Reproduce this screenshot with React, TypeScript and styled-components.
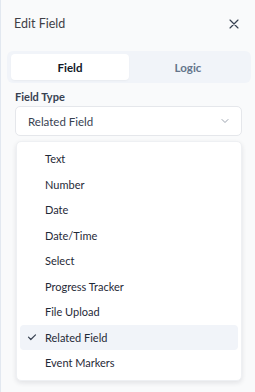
import React from 'react';
import styled, { createGlobalStyle } from 'styled-components';

const GlobalStyle = createGlobalStyle`
  html, body { margin: 0; padding: 0; }
  body {
    background: #f9fafb;
    font-family: Lato, "Noto Sans", sans-serif;
    -webkit-font-smoothing: antialiased;
  }
`;

const Panel = styled.div`
  width: 255px;
  height: 392px;
  box-sizing: border-box;
  border-left: 1px solid #e2e8f0;
  background: #f9fafb;
  display: flex;
  flex-direction: column;
`;

const Header = styled.div`
  display: flex;
  align-items: center;
  justify-content: space-between;
  height: 47px;
  padding: 0 15px 0 13px;
`;

const Title = styled.h2`
  margin: 0;
  font-size: 12.5px;
  font-weight: 400;
  color: #3f3f46;
`;

const CloseButton = styled.button`
  border: none;
  background: none;
  padding: 0;
  display: flex;
  color: #374151;
  cursor: pointer;
`;

const Tabs = styled.div`
  margin: 4px 4px 0 6px;
  padding: 3px 4px;
  background: #f1f4f9;
  border-radius: 6px;
  display: grid;
  grid-template-columns: 1fr 1fr;
`;

const Tab = styled.button<{ $active?: boolean }>`
  height: 26px;
  border: none;
  border-radius: 4px;
  font-family: inherit;
  font-size: 11.5px;
  font-weight: 700;
  background: ${p => (p.$active ? '#ffffff' : 'transparent')};
  color: ${p => (p.$active ? '#111827' : '#64748b')};
  box-shadow: ${p => (p.$active ? '0 1px 2px rgba(0,0,0,0.04)' : 'none')};
`;

const Body = styled.div`
  padding: 6px 13px 0 14px;
  display: flex;
  flex-direction: column;
`;

const Label = styled.label`
  font-size: 11px;
  font-weight: 700;
  color: #374151;
  line-height: 16px;
  margin-bottom: 1px;
`;

const Trigger = styled.div`
  height: 30px;
  box-sizing: border-box;
  border: 1px solid #e5e7eb;
  border-radius: 5px;
  background: #ffffff;
  display: flex;
  align-items: center;
  justify-content: space-between;
  padding: 0 11px 0 12px;
  font-size: 11.5px;
  color: #374151;
`;

const Menu = styled.ul`
  list-style: none;
  margin: 5px 0 0 1px;
  padding: 4px 3px;
  background: #ffffff;
  border: 1px solid #eef0f3;
  border-radius: 5px;
  box-shadow: 0 2px 5px rgba(15, 23, 42, 0.1);
`;

const Item = styled.li<{ $selected?: boolean }>`
  position: relative;
  height: 25.5px;
  display: flex;
  align-items: center;
  padding-left: 25px;
  border-radius: 4px;
  font-size: 11px;
  color: #1f2937;
  background: ${p => (p.$selected ? '#f1f4f9' : 'transparent')};
`;

const Check = styled.span`
  position: absolute;
  left: 7px;
  top: 50%;
  transform: translateY(-50%);
  display: flex;
`;

const types = [
  'Text',
  'Number',
  'Date',
  'Date/Time',
  'Select',
  'Progress Tracker',
  'File Upload',
  'Related Field',
  'Event Markers',
];

const selected = 'Related Field';

export default function App() {
  return (
    <>
      <GlobalStyle />
      <Panel>
        <Header>
          <Title>Edit Field</Title>
          <CloseButton aria-label="Close">
            <svg width="12" height="12" viewBox="0 0 12 12" fill="none" stroke="currentColor" strokeWidth="1.15" strokeLinecap="round">
              <path d="M2 2l8 8M10 2l-8 8" />
            </svg>
          </CloseButton>
        </Header>
        <Tabs>
          <Tab $active>Field</Tab>
          <Tab>Logic</Tab>
        </Tabs>
        <Body>
          <Label>Field Type</Label>
          <Trigger>
            <span>{selected}</span>
            <svg width="10" height="10" viewBox="0 0 10 10" fill="none" stroke="#9ca3af" strokeWidth="1" strokeLinecap="round" strokeLinejoin="round">
              <path d="M2 3.5l3 3 3-3" />
            </svg>
          </Trigger>
          <Menu>
            {types.map(t => (
              <Item key={t} $selected={t === selected}>
                {t === selected && (
                  <Check>
                    <svg width="10" height="10" viewBox="0 0 10 10" fill="none" stroke="#374151" strokeWidth="1.2" strokeLinecap="round" strokeLinejoin="round">
                      <path d="M1.5 5.2l2.3 2.3L8.5 2.8" />
                    </svg>
                  </Check>
                )}
                {t}
              </Item>
            ))}
          </Menu>
        </Body>
      </Panel>
    </>
  );
}
